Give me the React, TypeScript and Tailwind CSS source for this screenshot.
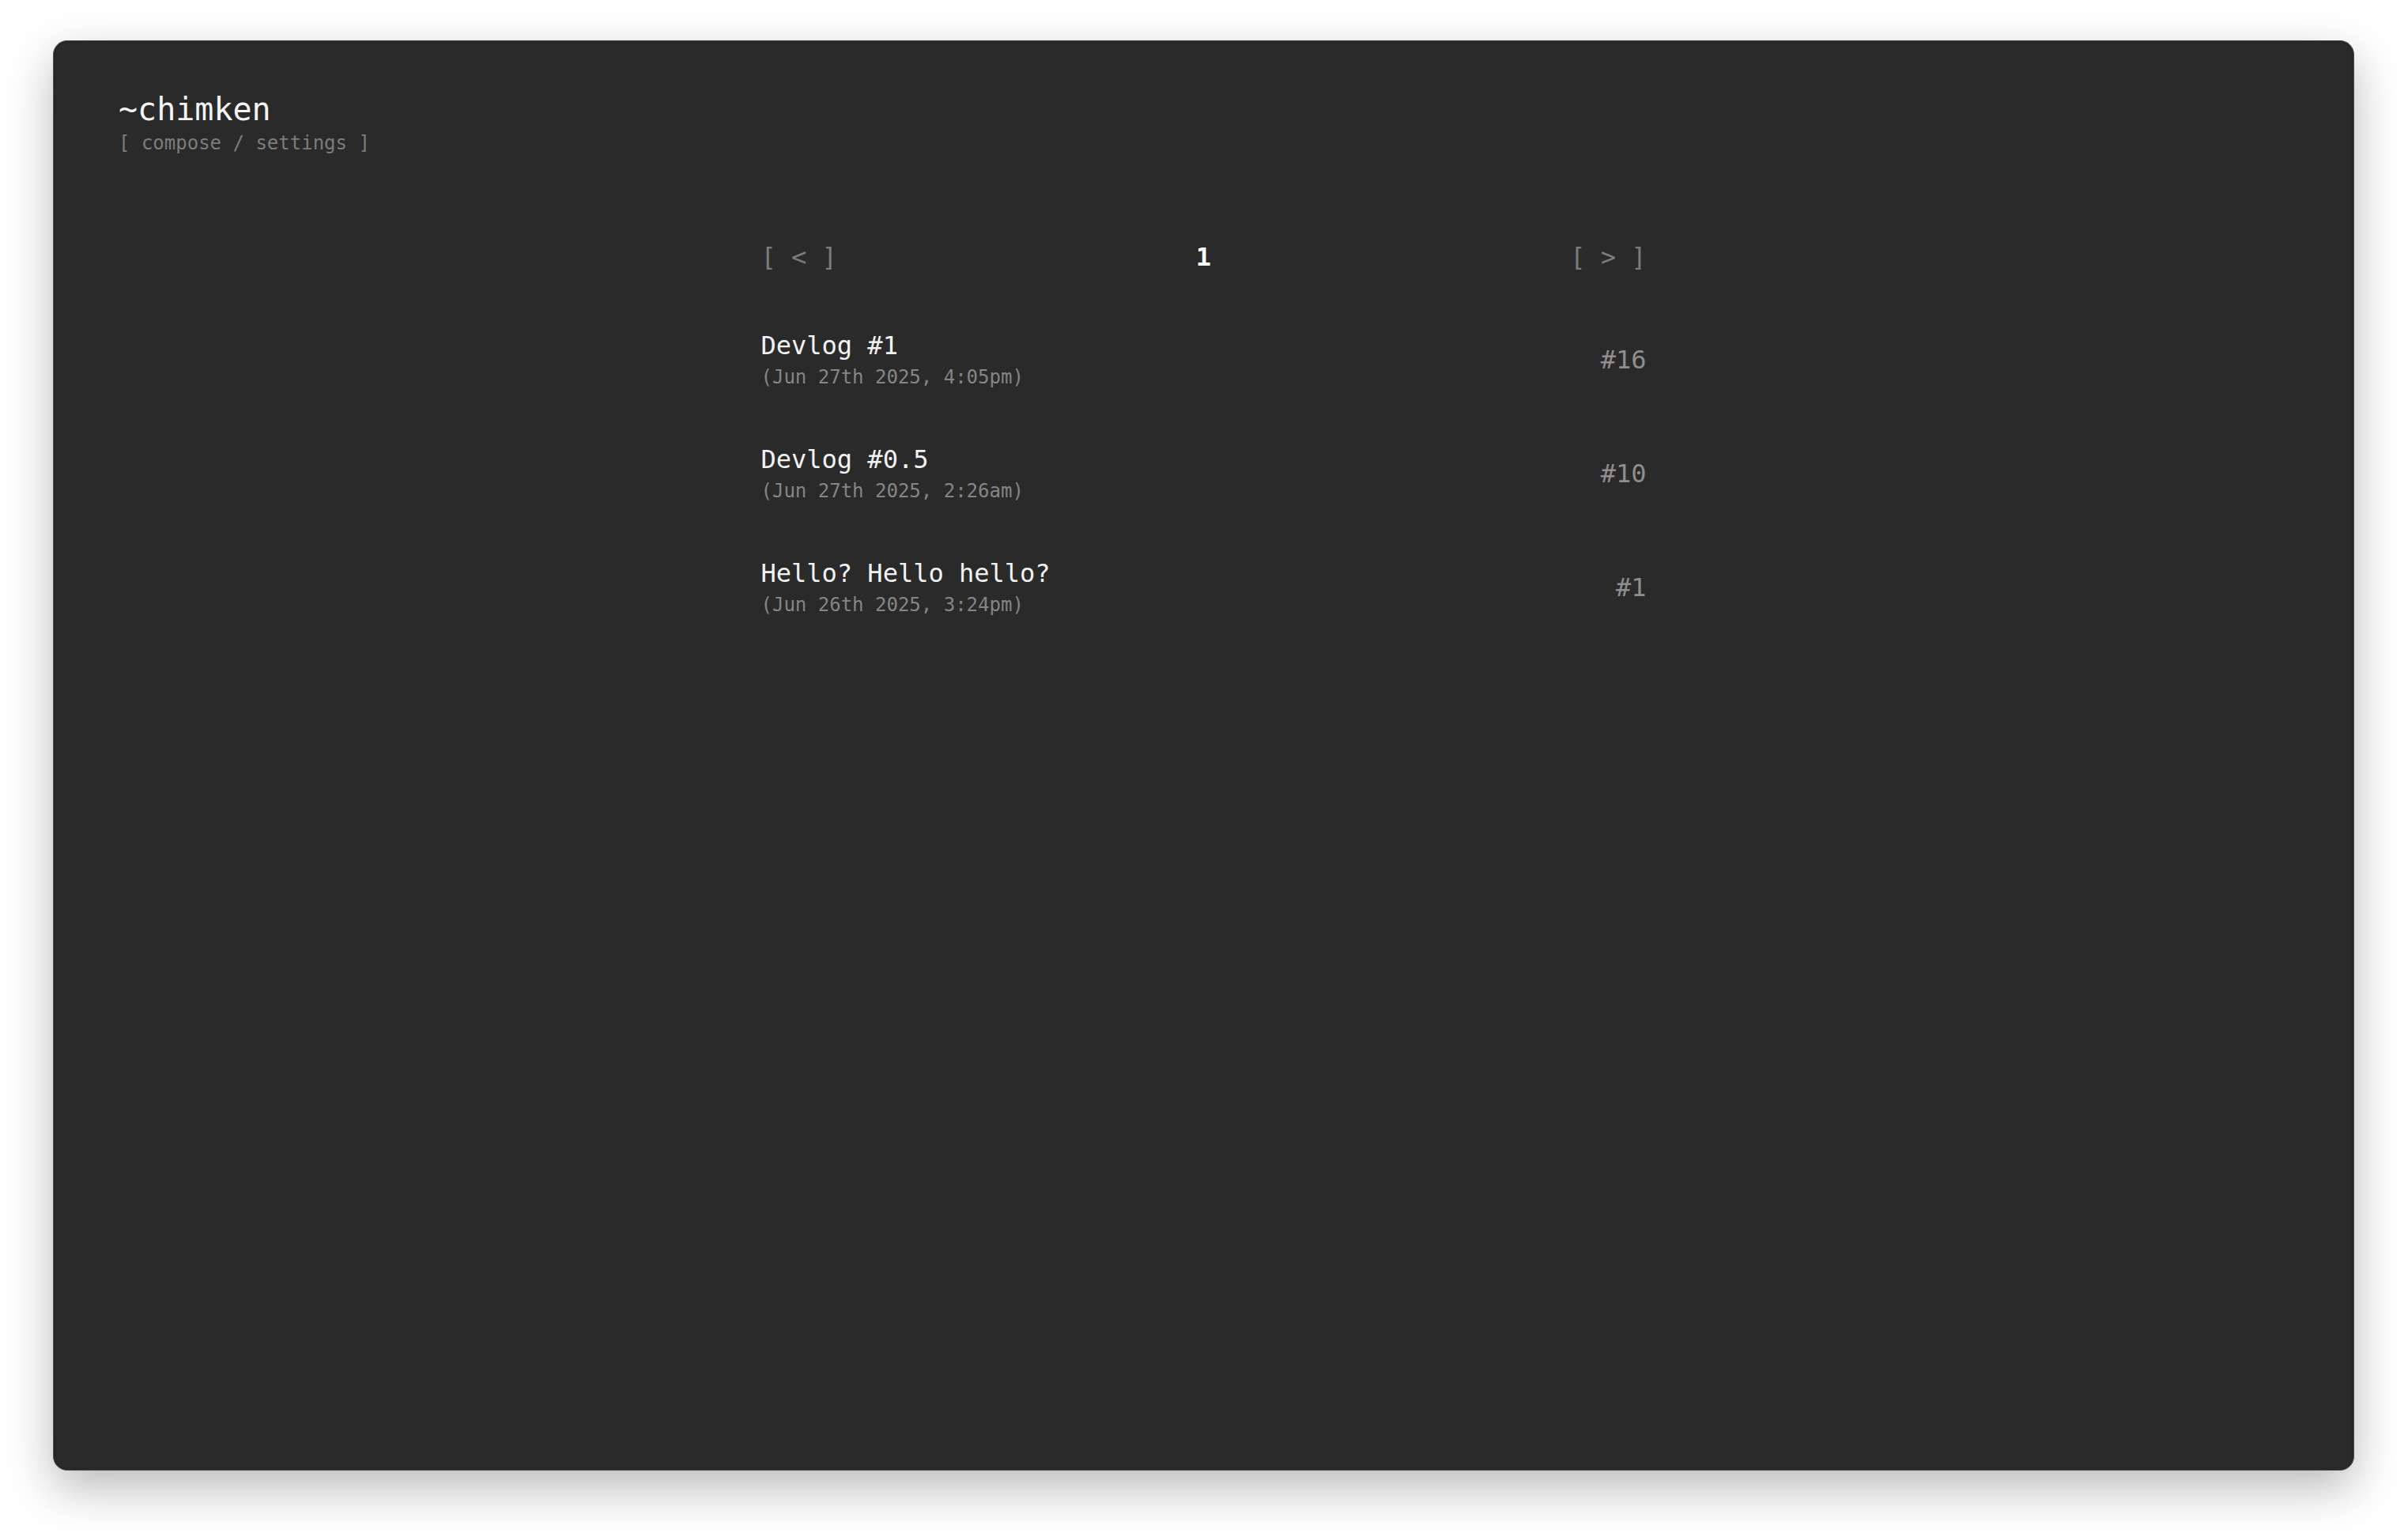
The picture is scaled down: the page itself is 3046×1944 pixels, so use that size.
import React from 'react';

type Post = { id: number; title: string; date: string };

const posts: Post[] = [
  { id: 16, title: 'Devlog #1', date: 'Jun 27th 2025, 4:05pm' },
  { id: 10, title: 'Devlog #0.5', date: 'Jun 27th 2025, 2:26am' },
  { id: 1, title: 'Hello? Hello hello?', date: 'Jun 26th 2025, 3:24pm' },
];

const mono = "font-['DejaVu_Sans_Mono','Liberation_Mono',monospace]";

export default function App() {
  return (
    <div className="h-screen w-full bg-white pl-[67px] pr-[68px] pt-[51px] pb-[84px]">
      {/* window */}
      <div
        className={`h-full w-full rounded-[18px] border border-[#525252] bg-[#2a2a2a] shadow-[0_22px_60px_rgba(0,0,0,0.28),inset_0_0_0_2px_#262626] px-[82px] pt-[61px] ${mono}`}
      >
        <header>
          <h1 className="text-[40px] leading-[50px] text-[#f4f4f4]">~chimken</h1>
          <p className="mt-0.5 text-[24px] leading-[32px] text-[#7c7c7c]">
            [ <span>compose</span> / <span>settings</span> ]
          </p>
        </header>

        <main className="mx-auto mt-[106px] w-[1120px]">
          {/* pagination */}
          <div className="flex items-center justify-between text-[32px] leading-[44px]">
            <span className="text-[#7c7c7c]">[ &lt; ]</span>
            <span className="font-bold text-white">1</span>
            <span className="text-[#7c7c7c]">[ &gt; ]</span>
          </div>

          <ul className="mt-[68px] flex flex-col gap-[64px]">
            {posts.map((p) => (
              <li key={p.id} className="flex items-center justify-between">
                <div className="flex flex-col">
                  <span className="text-[32px] leading-[44px] text-[#f2f2f2]">{p.title}</span>
                  <span className="text-[24px] leading-[36px] text-[#858585]">({p.date})</span>
                </div>
                <span className="text-[32px] leading-[44px] text-[#8e8e8e]">#{p.id}</span>
              </li>
            ))}
          </ul>
        </main>
      </div>
    </div>
  );
}
